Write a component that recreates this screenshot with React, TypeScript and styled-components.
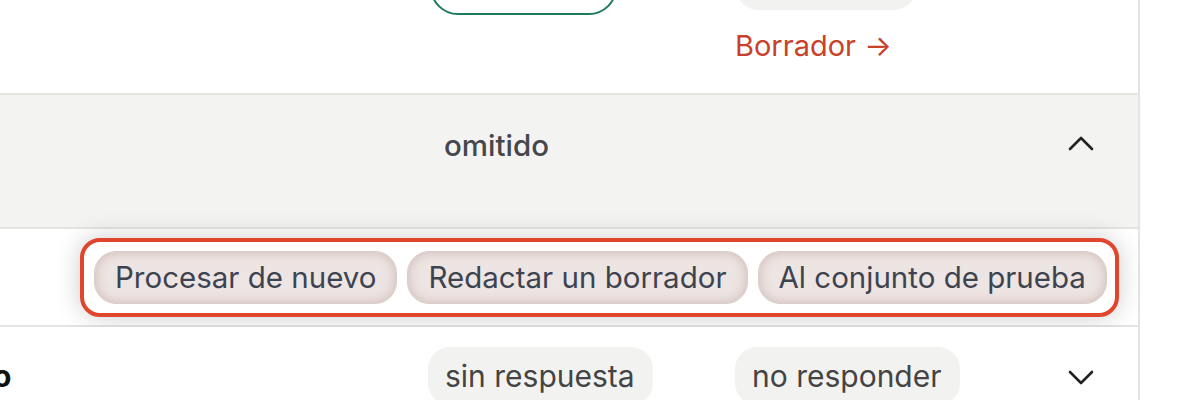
import React from "react";
import styled, { createGlobalStyle } from "styled-components";

const GlobalStyle = createGlobalStyle`
  html, body {
    margin: 0;
    padding: 0;
    background: #ffffff;
    font-family: Inter, "Liberation Sans", sans-serif;
    overflow: hidden;
  }
`;

const Page = styled.div`
  display: flex;
  width: 1200px;
  height: 400px;
  overflow: hidden;
`;

const Panel = styled.div`
  width: 1138px;
  border-right: 2px solid #e4e4e1;
  display: flex;
  flex-direction: column;
`;

const Row = styled.div<{ $height: number; $bg?: string }>`
  display: grid;
  grid-template-columns: 428px 307px 1fr 80px;
  flex-shrink: 0;
  height: ${(p) => p.$height}px;
  background: ${(p) => p.$bg || "#fff"};
  border-bottom: 2px solid #e4e4e1;
  box-sizing: border-box;
  overflow: hidden;
`;

const Cell = styled.div<{ $pt?: number }>`
  display: flex;
  flex-direction: column;
  align-items: flex-start;
  padding-top: ${(p) => p.$pt ?? 0}px;
  min-width: 0;
`;

const NameCell = styled(Cell)`
  overflow: hidden;
`;

const Name = styled.div`
  font-size: 30px;
  font-weight: 700;
  color: #111;
  margin-left: -7px;
  line-height: 36px;
`;

const OutlinePill = styled.div`
  width: 187px;
  height: 60px;
  margin: -45px 0 0 2px;
  border: 2px solid #1f7a58;
  border-radius: 28px;
  box-sizing: border-box;
`;

const Pill = styled.div<{ $width?: number }>`
  height: 58px;
  ${(p) => (p.$width ? `width: ${p.$width}px;` : "")}
  padding: 0 18px 0 17px;
  display: flex;
  align-items: center;
  border-radius: 22px;
  background: #f2f2f0;
  color: #444;
  font-size: 30px;
  box-sizing: border-box;
  white-space: nowrap;
`;

const TopPill = styled(Pill)`
  margin-top: -48px;
  margin-left: 1px;
`;

const DraftLink = styled.a`
  margin-top: 18px;
  font-size: 29px;
  color: #c8412a;
  text-decoration: none;
  line-height: 36px;
`;

const Status = styled.div`
  font-size: 29.5px;
  font-weight: 500;
  color: #45474c;
  padding-left: 16px;
  line-height: 36px;
`;

const ChevronCell = styled.div<{ $pt: number }>`
  display: flex;
  justify-content: flex-start;
  padding-top: ${(p) => p.$pt}px;
  padding-left: 10px;
`;

const ActionRow = styled.div`
  flex-shrink: 0;
  height: 98px;
  border-bottom: 2px solid #e4e4e1;
  box-sizing: border-box;
  display: flex;
  align-items: center;
  padding-left: 80px;
`;

const Highlight = styled.div`
  display: flex;
  gap: 10px;
  padding: 9px 8px 9px 10px;
  border: 4px solid #e0462c;
  border-radius: 20px;
  box-shadow: 0 0 26px rgba(0, 0, 0, 0.2);
  background: #fff;
`;

const ActionButton = styled.button`
  height: 53px;
  margin: 0;
  padding: 0 20px;
  font-family: Inter, "Liberation Sans", sans-serif;
  font-size: 29.5px;
  color: #3e4350;
  border: 1px solid #d8cecb;
  border-radius: 22px;
  background: #ede5e3;
  box-shadow: inset 0 0 12px rgba(160, 115, 110, 0.4);
  white-space: nowrap;
  cursor: pointer;
`;

function Chevron({ up }: { up?: boolean }) {
  return (
    <svg width="26" height="18" viewBox="0 0 26 18" fill="none">
      <path
        d={up ? "M2 15 L13 4 L24 15" : "M2 4 L13 15 L24 4"}
        stroke="#222"
        strokeWidth="2.6"
        strokeLinecap="round"
        strokeLinejoin="round"
      />
    </svg>
  );
}

export default function App() {
  return (
    <Page>
      <GlobalStyle />
      <Panel>
        <Row $height={95}>
          <Cell />
          <Cell>
            <OutlinePill />
          </Cell>
          <Cell>
            <TopPill $width={180} />
            <DraftLink href="#">Borrador →</DraftLink>
          </Cell>
          <Cell />
        </Row>
        <Row $height={134} $bg="#f3f3f1">
          <Cell />
          <Cell $pt={32}>
            <Status>omitido</Status>
          </Cell>
          <Cell />
          <ChevronCell $pt={39}>
            <Chevron up />
          </ChevronCell>
        </Row>
        <ActionRow>
          <Highlight>
            <ActionButton>Procesar de nuevo</ActionButton>
            <ActionButton>Redactar un borrador</ActionButton>
            <ActionButton>Al conjunto de prueba</ActionButton>
          </Highlight>
        </ActionRow>
        <Row $height={100}>
          <NameCell $pt={31}>
            <Name>o</Name>
          </NameCell>
          <Cell $pt={20}>
            <Pill>sin respuesta</Pill>
          </Cell>
          <Cell $pt={20}>
            <Pill>no responder</Pill>
          </Cell>
          <ChevronCell $pt={41}>
            <Chevron />
          </ChevronCell>
        </Row>
      </Panel>
    </Page>
  );
}
